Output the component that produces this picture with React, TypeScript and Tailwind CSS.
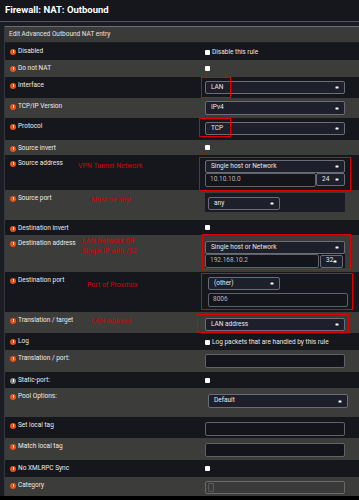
import React from "react";

const Info = ({ gray }: { gray?: boolean }) => (
  <span
    className={`inline-flex items-center justify-center w-[6px] h-[6px] rounded-full mr-[2px] shrink-0 ${gray ? "bg-[#8a8a8a]" : "bg-[#e2561e]"}`}
  >
    <span className="w-[1px] h-[3px] bg-white" />
  </span>
);

const Caret = () => (
  <svg width="4" height="3" viewBox="0 0 4 3" className="shrink-0">
    <rect x="0.5" y="0.5" width="3" height="2" fill="#ffffff" rx="0.5" />
  </svg>
);

const Select = ({ text, w = "w-[140px]", cls = "" }: { text: string; w?: string; cls?: string }) => (
  <div
    className={`${w} ${cls} h-[13px] flex items-center justify-between bg-[#1d1f2b] border border-[#6a6d78] rounded-[2px] pl-[5px] pr-[5px] text-[6.5px] text-[#e8e8e8]`}
  >
    <span>{text}</span>
    <Caret />
  </div>
);

const Input = ({ text = "", w = "w-[140px]", cls = "" }: { text?: string; w?: string; cls?: string }) => (
  <div
    className={`${w} ${cls} h-[14px] flex items-center bg-[#14151b] border border-[#5f626b] rounded-[2px] pl-[4px] text-[6.5px] text-[#b8b8b8]`}
  >
    {text}
  </div>
);

const Check = ({ label }: { label?: string }) => (
  <div className="flex items-center pt-[6px] text-[6.5px] leading-[7px] text-[#e8e8e8]">
    <span className="w-[5px] h-[5px] bg-white rounded-[1px] mr-[2px]" />
    {label}
  </div>
);

type RowProps = {
  label: string;
  light?: boolean;
  h: string;
  gray?: boolean;
  children?: React.ReactNode;
};

const Row = ({ label, light, h, gray, children }: RowProps) => (
  <div className={`flex ${h} ${light ? "bg-[#3c3c3a]" : "bg-[#16171d]"}`}>
    <div className="w-[200px] shrink-0 pl-[5px] pt-[5px] flex items-start">
      <div className="flex items-center text-[6.5px] leading-[7px] text-[#ececec]">
        <Info gray={gray} />
        {label}
      </div>
    </div>
    <div className="flex-1 flex flex-col">{children}</div>
  </div>
);

const Ann = ({ text, x, y }: { text: string; x: number; y: number }) => (
  <div
    className="absolute text-[7px] leading-[9px] text-[#d80000] whitespace-nowrap"
    style={{ left: x, top: y }}
  >
    {text}
  </div>
);

const Box = ({ x, y, w, h }: { x: number; y: number; w: number; h: number }) => (
  <div className="absolute border border-[#e00000]" style={{ left: x, top: y, width: w, height: h }} />
);

export default function App() {
  return (
    <div
      className="relative w-[359px] h-[500px] bg-black overflow-hidden"
      style={{ fontFamily: "Roboto, 'Liberation Sans', sans-serif" }}
    >
      <div className="h-[21px] bg-[#15171c] flex items-center pl-[5px] text-[9.5px] font-bold text-white">
        Firewall: NAT: Outbound
      </div>
      <div className="h-[1px] bg-[#50525c]" />
      <div className="bg-[#1b1d23] pl-[4px]">
        <div className="h-[4px]" />
        <div className="border-l border-[#34363e]">
          <div className="h-[17px] bg-[#3a3a38] border-t border-[#6a6c78] border-b border-b-[#1f2026] flex items-center pl-[4px] text-[6.5px] text-[#e6e6e6]">
            Edit Advanced Outbound NAT entry
          </div>
          <Row label="Disabled" h="h-[17px]">
            <Check label="Disable this rule" />
          </Row>
          <Row label="Do not NAT" light h="h-[17px]">
            <Check />
          </Row>
          <Row label="Interface" h="h-[21px]">
            <Select text="LAN" cls="mt-[4px]" />
          </Row>
          <Row label="TCP/IP Version" light h="h-[20px]">
            <Select text="IPv4" cls="mt-[3px] h-[14px]" />
          </Row>
          <Row label="Protocol" h="h-[22px]">
            <Select text="TCP" cls="mt-[4px]" />
          </Row>
          <Row label="Source invert" light h="h-[15px]">
            <div className="-mt-[1px]">
              <Check />
            </div>
          </Row>
          <Row label="Source address" h="h-[35px]">
            <div className="mt-[5px] w-[140px]">
              <Select text="Single host or Network" />
              <div className="flex">
                <Input text="10.10.10.0" w="w-[111px]" cls="h-[13px]" />
                <Select text="24" w="w-[29px]" />
              </div>
            </div>
          </Row>
          <Row label="Source port" light h="h-[30px]">
            <div className="mt-[3px] w-[140px] h-[19px] bg-[#1a1c25] pl-[3px] pt-[4px]">
              <Select text="any" w="w-[72px]" />
            </div>
          </Row>
          <Row label="Destination invert" h="h-[15px]">
            <div className="-mt-[1px]">
              <Check />
            </div>
          </Row>
          <Row label="Destination address" light h="h-[37px]">
            <div className="mt-[6px] w-[140px]">
              <Select text="Single host or Network" />
              <div className="flex items-center bg-[#14151b]">
                <Input text="192.168.10.2" w="w-[114px]" />
                <Select text="32" w="w-[23px]" cls="ml-[1px]" />
              </div>
            </div>
          </Row>
          <Row label="Destination port" h="h-[40px]">
            <div className="mt-[5px] pl-[3px]">
              <Select text="(other)" w="w-[72px]" />
              <Input text="8006" cls="mt-[3px]" />
            </div>
          </Row>
          <Row label="Translation / target" light h="h-[21px]">
            <Select text="LAN address" cls="mt-[6px] h-[12px]" />
          </Row>
          <Row label="Log" h="h-[17px]">
            <Check label="Log packets that are handled by this rule" />
          </Row>
          <Row label="Translation / port:" light h="h-[22px]">
            <Input cls="mt-[4px]" />
          </Row>
          <Row label="Static-port:" gray h="h-[16px]">
            <Check />
          </Row>
          <Row label="Pool Options:" light h="h-[29px]">
            <Select text="Default" cls="mt-[6px] ml-[3px] h-[14px]" />
          </Row>
          <Row label="Set local tag" h="h-[21px]">
            <Input cls="mt-[5px] h-[13px]" />
          </Row>
          <Row label="Match local tag" light h="h-[22px]">
            <Input cls="mt-[5px]" />
          </Row>
          <Row label="No XMLRPC Sync" h="h-[17px]">
            <Check />
          </Row>
          <Row label="Category" light h="h-[19px]">
            <div className="mt-[4px] w-[140px] h-[13px] bg-[#3a3a3a] border border-[#6a6a6a] rounded-[2px] flex items-center pl-[2px]">
              <span className="w-[6px] h-[9px] border border-[#5a5a5a] rounded-[1px]" />
            </div>
          </Row>
        </div>
      </div>

      <Ann text="VPN Tunnel Network" x={78} y={162} />
      <Ann text="Must be any!" x={91} y={196} />
      <Ann text="LAN Network OR" x={82} y={237} />
      <Ann text="Single IP with /32" x={82} y={247} />
      <Ann text="Port of Proxmox" x={87} y={281} />
      <Ann text="LAN address" x={91} y={317} />

      <Box x={201} y={77} w={30} h={21} />
      <Box x={199} y={118} w={32} h={19} />
      <Box x={199} y={157} w={152} h={34} />
      <Box x={202} y={234} w={149} h={36} />
      <Box x={201} y={273} w={152} h={37} />
      <Box x={197} y={314} w={152} h={19} />
    </div>
  );
}
